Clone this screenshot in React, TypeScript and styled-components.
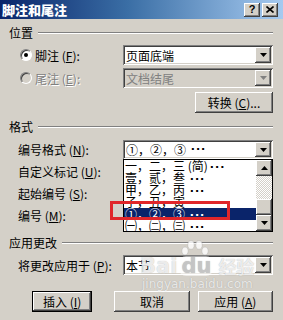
import React from "react";
import styled, { createGlobalStyle, css } from "styled-components";

const GlobalStyle = createGlobalStyle`
  html, body { margin: 0; padding: 0; background: #d4d0c8; }
  * { box-sizing: border-box; }
`;

const raised = css`
  background: #d4d0c8;
  box-shadow: inset -1px -1px #404040, inset 1px 1px #ffffff,
    inset -2px -2px #808080, inset 2px 2px #d4d0c8;
`;

const sunken = css`
  box-shadow: inset 1px 1px #808080, inset -1px -1px #ffffff,
    inset 2px 2px #404040, inset -2px -2px #d4d0c8;
`;

const Dialog = styled.div`
  position: relative;
  width: 283px;
  height: 320px;
  overflow: hidden;
  background: #d4d0c8;
  font-family: "Noto Sans CJK SC", "DejaVu Sans", sans-serif;
  font-size: 12px;
  color: #000;
`;

const TitleBar = styled.div`
  height: 19px;
  display: flex;
  align-items: center;
  justify-content: space-between;
  padding: 0 5px 0 2px;
  background: linear-gradient(to right, #0a246a 0%, #3a6ea5 45%, #a6caf0 100%);
`;

const TitleText = styled.div`
  color: #fff;
  font-weight: 900;
  font-size: 13px;
  line-height: 15px;
`;

const TitleButtons = styled.div`
  display: flex;
  gap: 2px;
`;

const TitleButton = styled.div`
  ${raised};
  width: 16px;
  height: 14px;
  display: flex;
  align-items: center;
  justify-content: center;
  font-family: "Liberation Sans", sans-serif;
  font-weight: bold;
  font-size: 11px;
  line-height: 11px;
`;

const Body = styled.div`
  padding: 0 10px 0 9px;
`;

const GroupHeader = styled.div<{ $top: number }>`
  display: flex;
  align-items: center;
  gap: 5px;
  height: 12px;
  line-height: 12px;
  margin-top: ${(p) => p.$top}px;
`;

const Etch = styled.div`
  flex: 1;
  height: 2px;
  border-top: 1px solid #808080;
  border-bottom: 1px solid #ffffff;
`;

const FieldRow = styled.div<{ $top: number; $indent: number; $h?: number }>`
  display: flex;
  align-items: center;
  height: ${(p) => p.$h ?? 20}px;
  margin-top: ${(p) => p.$top}px;
  padding-left: ${(p) => p.$indent}px;
`;

const Label = styled.div<{ $disabled?: boolean }>`
  flex: 1;
  display: flex;
  align-items: center;
  white-space: pre;
  color: ${(p) => (p.$disabled ? "#808080" : "#000")};
  text-shadow: ${(p) => (p.$disabled ? "1px 1px #ffffff" : "none")};
`;

const Radio = styled.span<{ $checked?: boolean; $disabled?: boolean }>`
  width: 12px;
  height: 12px;
  margin-right: 3px;
  border-radius: 50%;
  background: ${(p) => (p.$disabled ? "#d4d0c8" : "#fff")};
  border: 1px solid;
  border-color: #808080 #ffffff #ffffff #808080;
  box-shadow: inset 1px 1px #404040;
  display: flex;
  align-items: center;
  justify-content: center;
  &::after {
    content: "";
    width: 4px;
    height: 4px;
    border-radius: 50%;
    background: #000;
    display: ${(p) => (p.$checked ? "block" : "none")};
  }
`;

const Combo = styled.div<{ $disabled?: boolean; $h?: number }>`
  position: relative;
  width: 150px;
  height: ${(p) => p.$h ?? 20}px;
  background: ${(p) => (p.$disabled ? "#d4d0c8" : "#fff")};
  color: ${(p) => (p.$disabled ? "#808080" : "#000")};
  ${sunken};
  display: flex;
  align-items: center;
  padding-left: 3px;
  white-space: pre;
`;

const ArrowButton = styled.div`
  ${raised};
  position: absolute;
  right: 2px;
  top: 2px;
  bottom: 2px;
  width: 16px;
  display: flex;
  align-items: center;
  justify-content: center;
`;

const Arrow = ({ up, color = "#000" }: { up?: boolean; color?: string }) => (
  <svg width="7" height="4" viewBox="0 0 7 4">
    <path d={up ? "M3.5 0 L7 4 L0 4 Z" : "M0 0 L7 0 L3.5 4 Z"} fill={color} />
  </svg>
);

const Dots = styled.span`
  font-family: "DejaVu Sans", sans-serif;
  font-weight: bold;
  font-size: 11px;
  letter-spacing: 1px;
  margin-left: 2px;
`;

const ButtonRight = styled.div`
  display: flex;
  justify-content: flex-end;
  margin-top: 4px;
`;

const PushButton = styled.div<{ $w: number; $left?: number; $default?: boolean }>`
  ${raised};
  width: ${(p) => p.$w}px;
  height: 21px;
  margin-left: ${(p) => p.$left ?? 0}px;
  display: flex;
  align-items: center;
  justify-content: center;
  white-space: pre;
  ${(p) =>
    p.$default &&
    css`
      box-shadow: inset 0 0 0 1px #000, inset -2px -2px #404040,
        inset 2px 2px #ffffff, inset -3px -3px #808080;
    `}
`;

const ButtonBar = styled.div`
  display: flex;
  margin-top: 16px;
  padding-left: 23px;
`;

const DropList = styled.div`
  position: absolute;
  left: 0;
  top: 100%;
  width: 150px;
  height: 73px;
  background: #fff;
  border: 1px solid #000;
  display: flex;
  z-index: 2;
`;

const Items = styled.div`
  flex: 1;
  overflow: hidden;
`;

const Item = styled.div<{ $selected?: boolean }>`
  height: 12px;
  line-height: 12px;
  padding-left: 1px;
  white-space: pre;
  background: ${(p) => (p.$selected ? "#0a246a" : "transparent")};
  color: ${(p) => (p.$selected ? "#fff" : "#000")};
`;

const ScrollBar = styled.div`
  width: 16px;
  display: flex;
  flex-direction: column;
`;

const ScrollBtn = styled.div`
  ${raised};
  height: 16px;
  display: flex;
  align-items: center;
  justify-content: center;
`;

const Track = styled.div`
  flex: 1;
  display: flex;
  flex-direction: column;
  justify-content: flex-end;
  background: repeating-conic-gradient(#d4d0c8 0 25%, #ffffff 0 50%) 0 0 / 2px 2px;
`;

const Thumb = styled.div`
  ${raised};
  height: 16px;
`;

const Mark = styled.div`
  position: absolute;
  left: 110px;
  top: 201px;
  width: 120px;
  height: 19px;
  border: 3px solid #e0262a;
  z-index: 3;
`;

const Watermark = styled.div`
  position: absolute;
  left: 140px;
  top: 240px;
  width: 120px;
  z-index: 4;
  color: rgba(255, 255, 255, 0.75);
  text-shadow: 0 0 1px rgba(120, 120, 120, 0.6);
  pointer-events: none;
`;

const LogoLine = styled.div`
  display: flex;
  align-items: flex-end;
  margin-top: 16px;
  font-family: "DejaVu Sans", sans-serif;
  font-weight: bold;
  font-size: 21px;
  line-height: 20px;
`;

const DuBox = styled.span`
  position: relative;
  margin: 0 2px;
  padding: 0 2px;
  border-radius: 7px;
  background: rgba(255, 255, 255, 0.55);
  color: rgba(200, 200, 200, 0.9);
`;

const Paw = styled.svg`
  position: absolute;
  left: 40px;
  top: 0;
`;

const LogoCn = styled.span`
  font-family: "Noto Sans CJK SC", sans-serif;
  font-size: 18px;
  margin-left: 3px;
`;

const SiteLine = styled.div`
  font-family: "DejaVu Sans", sans-serif;
  font-size: 12px;
  line-height: 12px;
  margin-top: 2px;
  padding-left: 2px;
`;

const Acc = ({ k }: { k: string }) => (
  <>
    (<u>{k}</u>)
  </>
);

const listItems = [
  "一，二，三 (简)",
  "壹，贰，叁 ",
  "甲，乙，丙 ",
  "子，丑，寅 ",
  "①，②，③ ",
  "㈠，㈡，㈢ ",
];

export default function App() {
  return (
    <Dialog>
      <GlobalStyle />
      <TitleBar>
        <TitleText>脚注和尾注</TitleText>
        <TitleButtons>
          <TitleButton>?</TitleButton>
          <TitleButton>
            <svg width="8" height="7" viewBox="0 0 8 7">
              <path d="M0.5 0.5 L7.5 6.5 M7.5 0.5 L0.5 6.5" stroke="#000" strokeWidth="1.6" />
            </svg>
          </TitleButton>
        </TitleButtons>
      </TitleBar>
      <Body>
        <GroupHeader $top={8}>
          位置
          <Etch />
        </GroupHeader>
        <FieldRow $top={6} $indent={11}>
          <Label>
            <Radio $checked />
            脚注 <Acc k="F" />:
          </Label>
          <Combo>
            页面底端
            <ArrowButton>
              <Arrow />
            </ArrowButton>
          </Combo>
        </FieldRow>
        <FieldRow $top={3} $indent={11}>
          <Label $disabled>
            <Radio $disabled />
            尾注 <Acc k="E" />:
          </Label>
          <Combo $disabled>
            文档结尾
            <ArrowButton>
              <Arrow color="#808080" />
            </ArrowButton>
          </Combo>
        </FieldRow>
        <ButtonRight>
          <PushButton $w={78}>
            转换 <Acc k="C" />...
          </PushButton>
        </ButtonRight>

        <GroupHeader $top={8}>
          格式
          <Etch />
        </GroupHeader>
        <FieldRow $top={7} $indent={9} $h={19}>
          <Label>
            编号格式 <Acc k="N" />:
          </Label>
          <Combo $h={19}>
            ①，②，③ <Dots>···</Dots>
            <ArrowButton>
              <Arrow />
            </ArrowButton>
            <DropList>
              <Items>
                {listItems.map((t, i) => (
                  <Item key={t} $selected={i === 4}>
                    {t}
                    <Dots>···</Dots>
                  </Item>
                ))}
              </Items>
              <ScrollBar>
                <ScrollBtn>
                  <Arrow up />
                </ScrollBtn>
                <Track>
                  <Thumb />
                </Track>
                <ScrollBtn>
                  <Arrow />
                </ScrollBtn>
              </ScrollBar>
            </DropList>
          </Combo>
        </FieldRow>
        <FieldRow $top={1} $indent={9} $h={22}>
          <Label>
            自定义标记 <Acc k="U" />:
          </Label>
        </FieldRow>
        <FieldRow $top={0} $indent={9} $h={22}>
          <Label>
            起始编号 <Acc k="S" />:
          </Label>
        </FieldRow>
        <FieldRow $top={0} $indent={9} $h={22}>
          <Label>
            编号 <Acc k="M" />:
          </Label>
        </FieldRow>

        <GroupHeader $top={11}>
          应用更改
          <Etch />
        </GroupHeader>
        <FieldRow $top={6} $indent={9}>
          <Label>
            将更改应用于 <Acc k="P" />:
          </Label>
          <Combo>
            本节
            <ArrowButton>
              <Arrow />
            </ArrowButton>
          </Combo>
        </FieldRow>

        <ButtonBar>
          <PushButton $w={61} $default>
            插入 <Acc k="I" />
          </PushButton>
          <PushButton $w={76} $left={22}>
            取消
          </PushButton>
          <PushButton $w={76} $left={8}>
            应用 <Acc k="A" />
          </PushButton>
        </ButtonBar>
      </Body>

      <Mark />
      <Watermark>
        <Paw width="30" height="18" viewBox="0 0 30 18">
          <g fill="rgba(255,255,255,0.8)" stroke="rgba(150,150,150,0.5)" strokeWidth="0.6">
            <ellipse cx="5" cy="11" rx="3.2" ry="4" />
            <ellipse cx="11" cy="5" rx="3.2" ry="4.2" />
            <ellipse cx="19" cy="5" rx="3.2" ry="4.2" />
            <ellipse cx="25" cy="11" rx="3.2" ry="4" />
          </g>
        </Paw>
        <LogoLine>
          Bai<DuBox>du</DuBox>
          <LogoCn>经验</LogoCn>
        </LogoLine>
        <SiteLine>jingyan.baidu.com</SiteLine>
      </Watermark>
    </Dialog>
  );
}
